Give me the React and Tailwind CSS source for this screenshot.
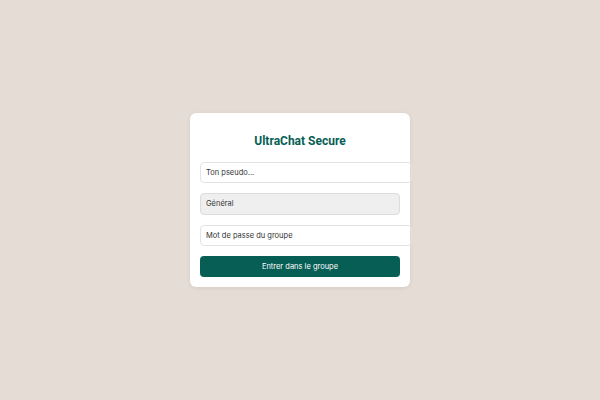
// App.jsx
export default function App() {
  return (
    <div className="min-h-screen w-full bg-[#e5ddd5] flex items-center justify-center font-['Inter','Liberation_Sans',sans-serif]">
      <div className="w-[220px] bg-white rounded-[6px] shadow-[0_1px_4px_rgba(0,0,0,0.08)] px-[10px] pt-[18px] pb-[10px]">
        <h2 className="text-center text-[12px] leading-[20px] font-bold text-[#075e54] font-['Roboto','Liberation_Sans',sans-serif] mb-[11px]">
          UltraChat Secure
        </h2>

        <div className="flex flex-col gap-[10px]">
          <input
            type="text"
            placeholder="Ton pseudo..."
            className="box-content w-full h-[19px] px-[5px] border border-[#e3e3e3] rounded-[4px] text-[7.5px] text-[#333] placeholder:text-[#333] outline-none"
          />
          <div className="h-[22px] w-full flex items-center px-[5px] bg-[#efefef] border border-[#dcdcdc] rounded-[4px] text-[7.5px] text-[#333]">
            Général
          </div>
          <input
            type="password"
            placeholder="Mot de passe du groupe"
            className="box-content w-full h-[19px] px-[5px] border border-[#e3e3e3] rounded-[4px] text-[7.5px] text-[#333] placeholder:text-[#333] outline-none"
          />
          <button className="w-full h-[21px] bg-[#075e54] text-white text-[7.5px] rounded-[4px]">
            Entrer dans le groupe
          </button>
        </div>
      </div>
    </div>
  );
}
